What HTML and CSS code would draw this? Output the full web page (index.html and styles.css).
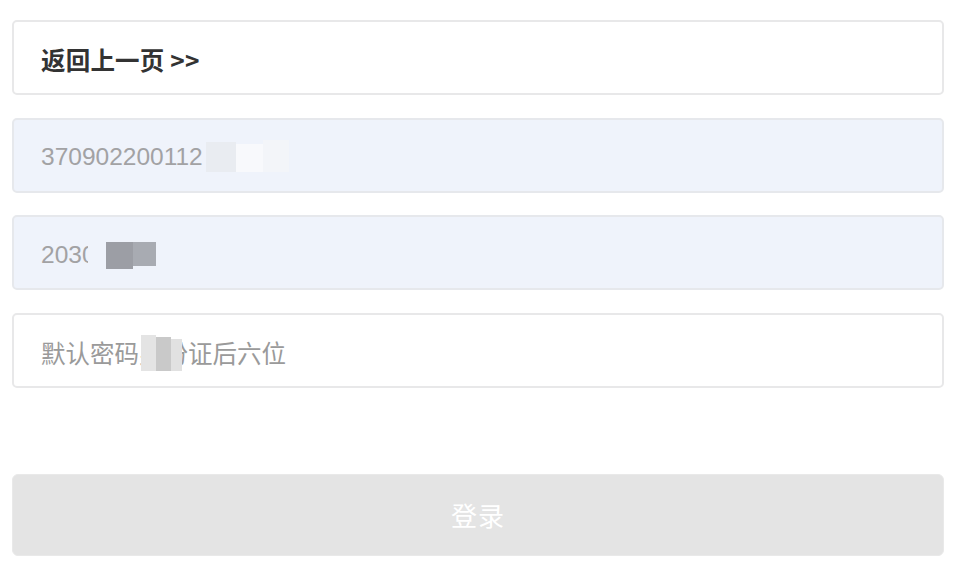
FILE: index.html
```html
<!DOCTYPE html>
<html lang="zh">
<head>
<meta charset="utf-8">
<link rel="stylesheet" href="styles.css">
</head>
<body>
<div class="page">
  <div class="row row-back"><span class="back">返回上一页 &gt;&gt;</span></div>
  <div class="row row-filled">
    <span class="val">370902200112</span><span class="mask m-light"><i class="a"></i><i class="b"></i><i class="c"></i></span>
  </div>
  <div class="row row-filled">
    <span class="val hold">2030<span class="mask m-dark"><i class="a"></i><i class="b"></i><i class="c"></i></span></span>
  </div>
  <div class="row">
    <span class="ph hold">默认密码身份证后六位<span class="mask m-grey"><i class="a"></i><i class="b"></i><i class="c"></i></span></span>
  </div>
  <div class="spacer"></div>
  <button class="login">登录</button>
</div>
</body>
</html>
```

FILE: styles.css
```css
* { box-sizing: border-box; }
html, body { margin: 0; padding: 0; background: #ffffff; }
body {
  font-family: "Liberation Sans", "Noto Sans CJK SC", sans-serif;
  width: 954px;
  height: 563px;
  overflow: hidden;
}
.page {
  display: flex;
  flex-direction: column;
  gap: 22.7px;
  padding: 20px 10px 0 12px;
}
.row {
  height: 75px;
  border: 2px solid #e8e8e9;
  border-radius: 5px;
  background: #ffffff;
  display: flex;
  align-items: center;
  padding: 4px 0 0 27px;
}
.row-filled { background: #eff3fb; border-color: #e6e8ec; }
.back {
  font-family: "Noto Sans CJK SC", sans-serif;
  font-weight: 700;
  font-size: 24.5px;
  color: #333333;
  letter-spacing: 0.2px;
}
.val {
  font-family: "Liberation Sans", "Noto Sans CJK SC", sans-serif;
  font-size: 24.5px;
  color: #a2a2a4;
}
.ph {
  font-family: "Noto Sans CJK SC", sans-serif;
  font-size: 24.5px;
  color: #9a9a9a;
}
.hold { position: relative; display: inline-block; }
.mask { display: inline-flex; }
.mask i { display: block; }
.m-light { height: 30px; margin-left: 3px; align-items: stretch; }
.m-light .a { width: 30px; background: #e9ecf1; }
.m-light .b { width: 27px; background: #f8f9fc; margin-top: 2px; }
.m-light .c { width: 26px; background: #f3f5f9; margin-top: -2px; }
.m-dark {
  position: absolute;
  left: 47px;
  top: 1px;
  height: 27px;
}
.m-dark .a { width: 18px; background: #eff3fb; }
.m-dark .b { width: 27px; background: #9c9ea5; }
.m-dark .c { width: 23px; background: #a8abb2; margin-bottom: 3px; }
.m-grey {
  position: absolute;
  left: 100px;
  top: 0;
  height: 36px;
}
.m-grey .a { width: 15px; background: #e4e4e4; }
.m-grey .b { width: 15px; background: #c9c9c9; margin-top: 2px; }
.m-grey .c { width: 11px; background: #e1e1e1; margin-top: 4px; }
.spacer { height: 63px; margin-top: -22.7px; }
.login {
  height: 82px;
  border: 1px solid #e9e9e9;
  border-radius: 6px;
  background: #e4e4e4;
  color: #ffffff;
  font-family: "Noto Sans CJK SC", sans-serif;
  font-size: 26px;
  padding: 0;
  letter-spacing: 1px;
}
```
